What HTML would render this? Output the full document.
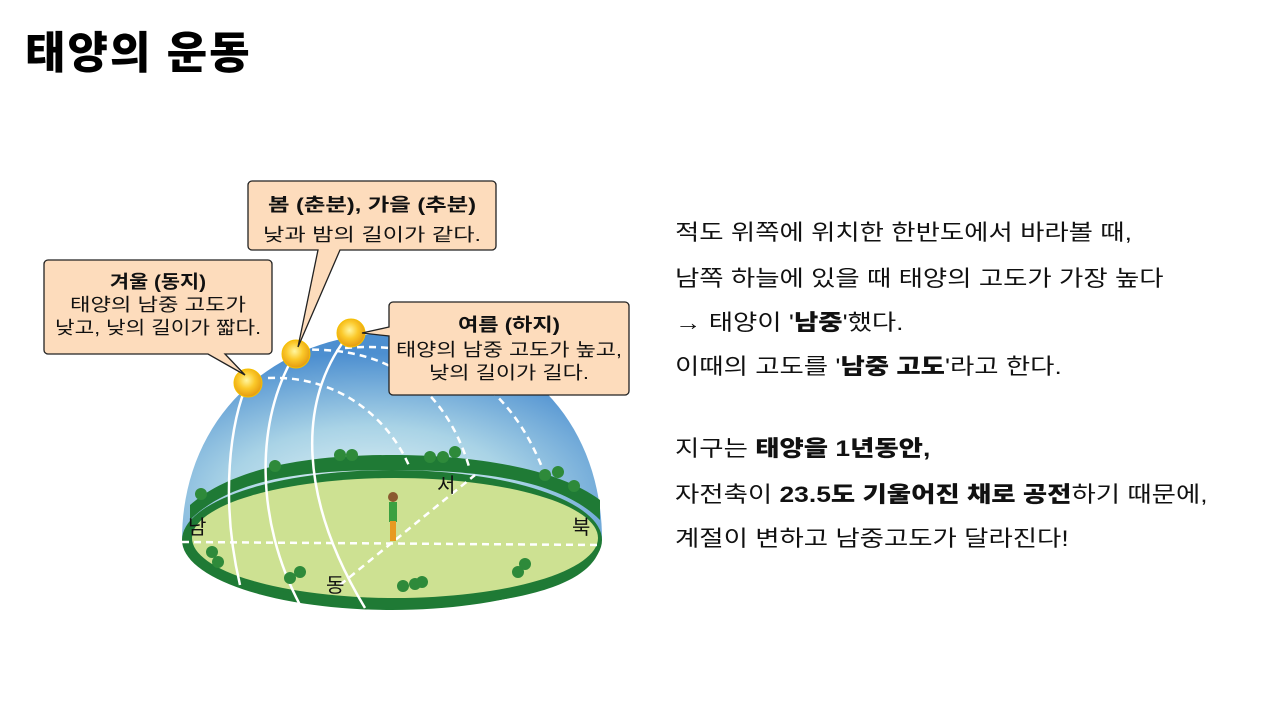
<!DOCTYPE html>
<html><head><meta charset="utf-8"><style>
body{margin:0;width:1280px;height:720px;background:#fff;position:relative;overflow:hidden;font-family:"Liberation Sans","Noto Sans CJK KR",sans-serif;}
h1{position:absolute;left:25px;top:17px;margin:0;font-size:44px;font-weight:900;color:#000;letter-spacing:2px;}
.t{position:absolute;left:675px;font-size:22px;color:#111;white-space:nowrap;transform:scaleX(1.2);transform-origin:left top;}
.t b{font-weight:800}
</style></head><body>
<h1>태양의 운동</h1>
<svg width="1280" height="720" style="position:absolute;left:0;top:0" font-family="Liberation Sans, Noto Sans CJK KR, sans-serif">
<defs>
<radialGradient id="sky" cx="0.45" cy="0.8" r="0.7"><stop offset="0" stop-color="#e6f4f6"/><stop offset="0.5" stop-color="#a9d3e6"/><stop offset="1" stop-color="#4d8fd0"/></radialGradient>
<radialGradient id="sun" cx="0.45" cy="0.4" r="0.6"><stop offset="0" stop-color="#fff6a0"/><stop offset="0.5" stop-color="#fbc92a"/><stop offset="1" stop-color="#e59a10"/></radialGradient>
</defs>
<path d="M182 540 C182 420 270 335 392 333 C520 333 602 420 602 540 Z" fill="url(#sky)"/>
<ellipse cx="392" cy="540" rx="210" ry="70" fill="#1f7a35"/>
<ellipse cx="395" cy="538" rx="203" ry="60" fill="#cde192"/>
<path d="M190 520 C230 480 300 470 392 470 C480 470 560 480 600 520 L600 500 C560 470 480 455 392 455 C300 455 230 470 190 505Z" fill="#1f7a35"/>
<path d="M186 546 C195 580 260 605 392 608 C520 606 590 585 600 548 C580 580 520 598 392 600 C270 598 205 580 186 546Z" fill="#1f7a35"/>
<g fill="none" stroke="#fff" stroke-width="2.5">
<path d="M240 585 C220 500 230 420 248 382"/>
<path d="M300 605 C255 520 255 420 295 354"/>
<path d="M365 608 C300 500 295 400 350 333"/>
</g>
<g fill="none" stroke="#fff" stroke-width="2.5" stroke-dasharray="7 5">
<path d="M182 542 L600 545"/>
<path d="M340 585 L475 475"/>
<path d="M268 378 C340 375 390 420 410 468"/>
<path d="M300 350 C400 345 450 400 470 470"/>
<path d="M345 348 C440 340 510 380 545 475"/>
</g>
<g fill="#2e8a3a">
<circle cx="275" cy="466" r="6"/><circle cx="340" cy="455" r="6"/><circle cx="352" cy="455" r="6"/>
<circle cx="430" cy="457" r="6"/><circle cx="443" cy="457" r="6"/><circle cx="455" cy="452" r="6"/>
<circle cx="545" cy="475" r="6"/><circle cx="558" cy="472" r="6"/><circle cx="574" cy="486" r="6"/>
<circle cx="201" cy="494" r="6"/><circle cx="212" cy="552" r="6"/><circle cx="218" cy="562" r="6"/>
<circle cx="290" cy="578" r="6"/><circle cx="300" cy="572" r="6"/><circle cx="403" cy="586" r="6"/><circle cx="415" cy="584" r="6"/><circle cx="422" cy="582" r="6"/>
<circle cx="518" cy="572" r="6"/><circle cx="525" cy="564" r="6"/>
</g>
<rect x="389" y="502" width="8" height="20" fill="#3aa040"/><rect x="390" y="521" width="6" height="20" fill="#e89a20"/><circle cx="393" cy="497" r="5" fill="#8a5a30"/>
<g font-size="20" fill="#111"><text x="188" y="534">남</text><text x="437" y="492">서</text><text x="572" y="534">북</text><text x="326" y="592">동</text></g>
<circle cx="248" cy="383" r="14" fill="url(#sun)" stroke="#f5c000"/>
<circle cx="296" cy="354" r="14" fill="url(#sun)" stroke="#f5c000"/>
<circle cx="351" cy="333" r="14" fill="url(#sun)" stroke="#f5c000"/>
<g fill="#fddcbc" stroke="#222" stroke-width="1.3">
<path d="M50 260 H268 a4 4 0 0 1 4 4 V350 a4 4 0 0 1 -4 4 H225 L245 375 L208 354 H48 a4 4 0 0 1 -4 -4 V264 a4 4 0 0 1 4 -4Z"/>
<path d="M252 181 H492 a4 4 0 0 1 4 4 V246 a4 4 0 0 1 -4 4 H340 L298 347 L318 250 H252 a4 4 0 0 1 -4 -4 V185 a4 4 0 0 1 4 -4Z"/>
<path d="M393 302 H625 a4 4 0 0 1 4 4 V391 a4 4 0 0 1 -4 4 H393 a4 4 0 0 1 -4 -4 V336 L362 333 L389 327 V306 a4 4 0 0 1 4 -4Z"/>
</g>
<g font-size="18" fill="#111" text-anchor="middle" lengthAdjust="spacingAndGlyphs">
<text x="158" y="288" font-weight="bold" textLength="96" lengthAdjust="spacingAndGlyphs">겨울 (동지)</text><text x="158" y="311" textLength="176" lengthAdjust="spacingAndGlyphs">태양의 남중 고도가</text><text x="158" y="334" textLength="206" lengthAdjust="spacingAndGlyphs">낮고, 낮의 길이가 짧다.</text>
<text x="372" y="211" font-weight="bold" textLength="208" lengthAdjust="spacingAndGlyphs">봄 (춘분), 가을 (추분)</text><text x="372" y="241" textLength="218" lengthAdjust="spacingAndGlyphs">낮과 밤의 길이가 같다.</text>
<text x="509" y="331" font-weight="bold" textLength="102" lengthAdjust="spacingAndGlyphs">여름 (하지)</text><text x="509" y="356" textLength="226" lengthAdjust="spacingAndGlyphs">태양의 남중 고도가 높고,</text><text x="509" y="379" textLength="160" lengthAdjust="spacingAndGlyphs">낮의 길이가 길다.</text>
</g>
</svg>
<div class="t" style="top:215px">적도 위쪽에 위치한 한반도에서 바라볼 때,</div>
<div class="t" style="top:261px">남쪽 하늘에 있을 때 태양의 고도가 가장 높다</div>
<div class="t" style="top:305px">→ 태양이 '<b>남중</b>'했다.</div>
<div class="t" style="top:349px">이때의 고도를 '<b>남중 고도</b>'라고 한다.</div>
<div class="t" style="top:431px">지구는 <b>태양을 1년동안,</b></div>
<div class="t" style="top:477px">자전축이 <b>23.5도 기울어진 채로 공전</b>하기 때문에,</div>
<div class="t" style="top:521px">계절이 변하고 남중고도가 달라진다!</div>
</body></html>
